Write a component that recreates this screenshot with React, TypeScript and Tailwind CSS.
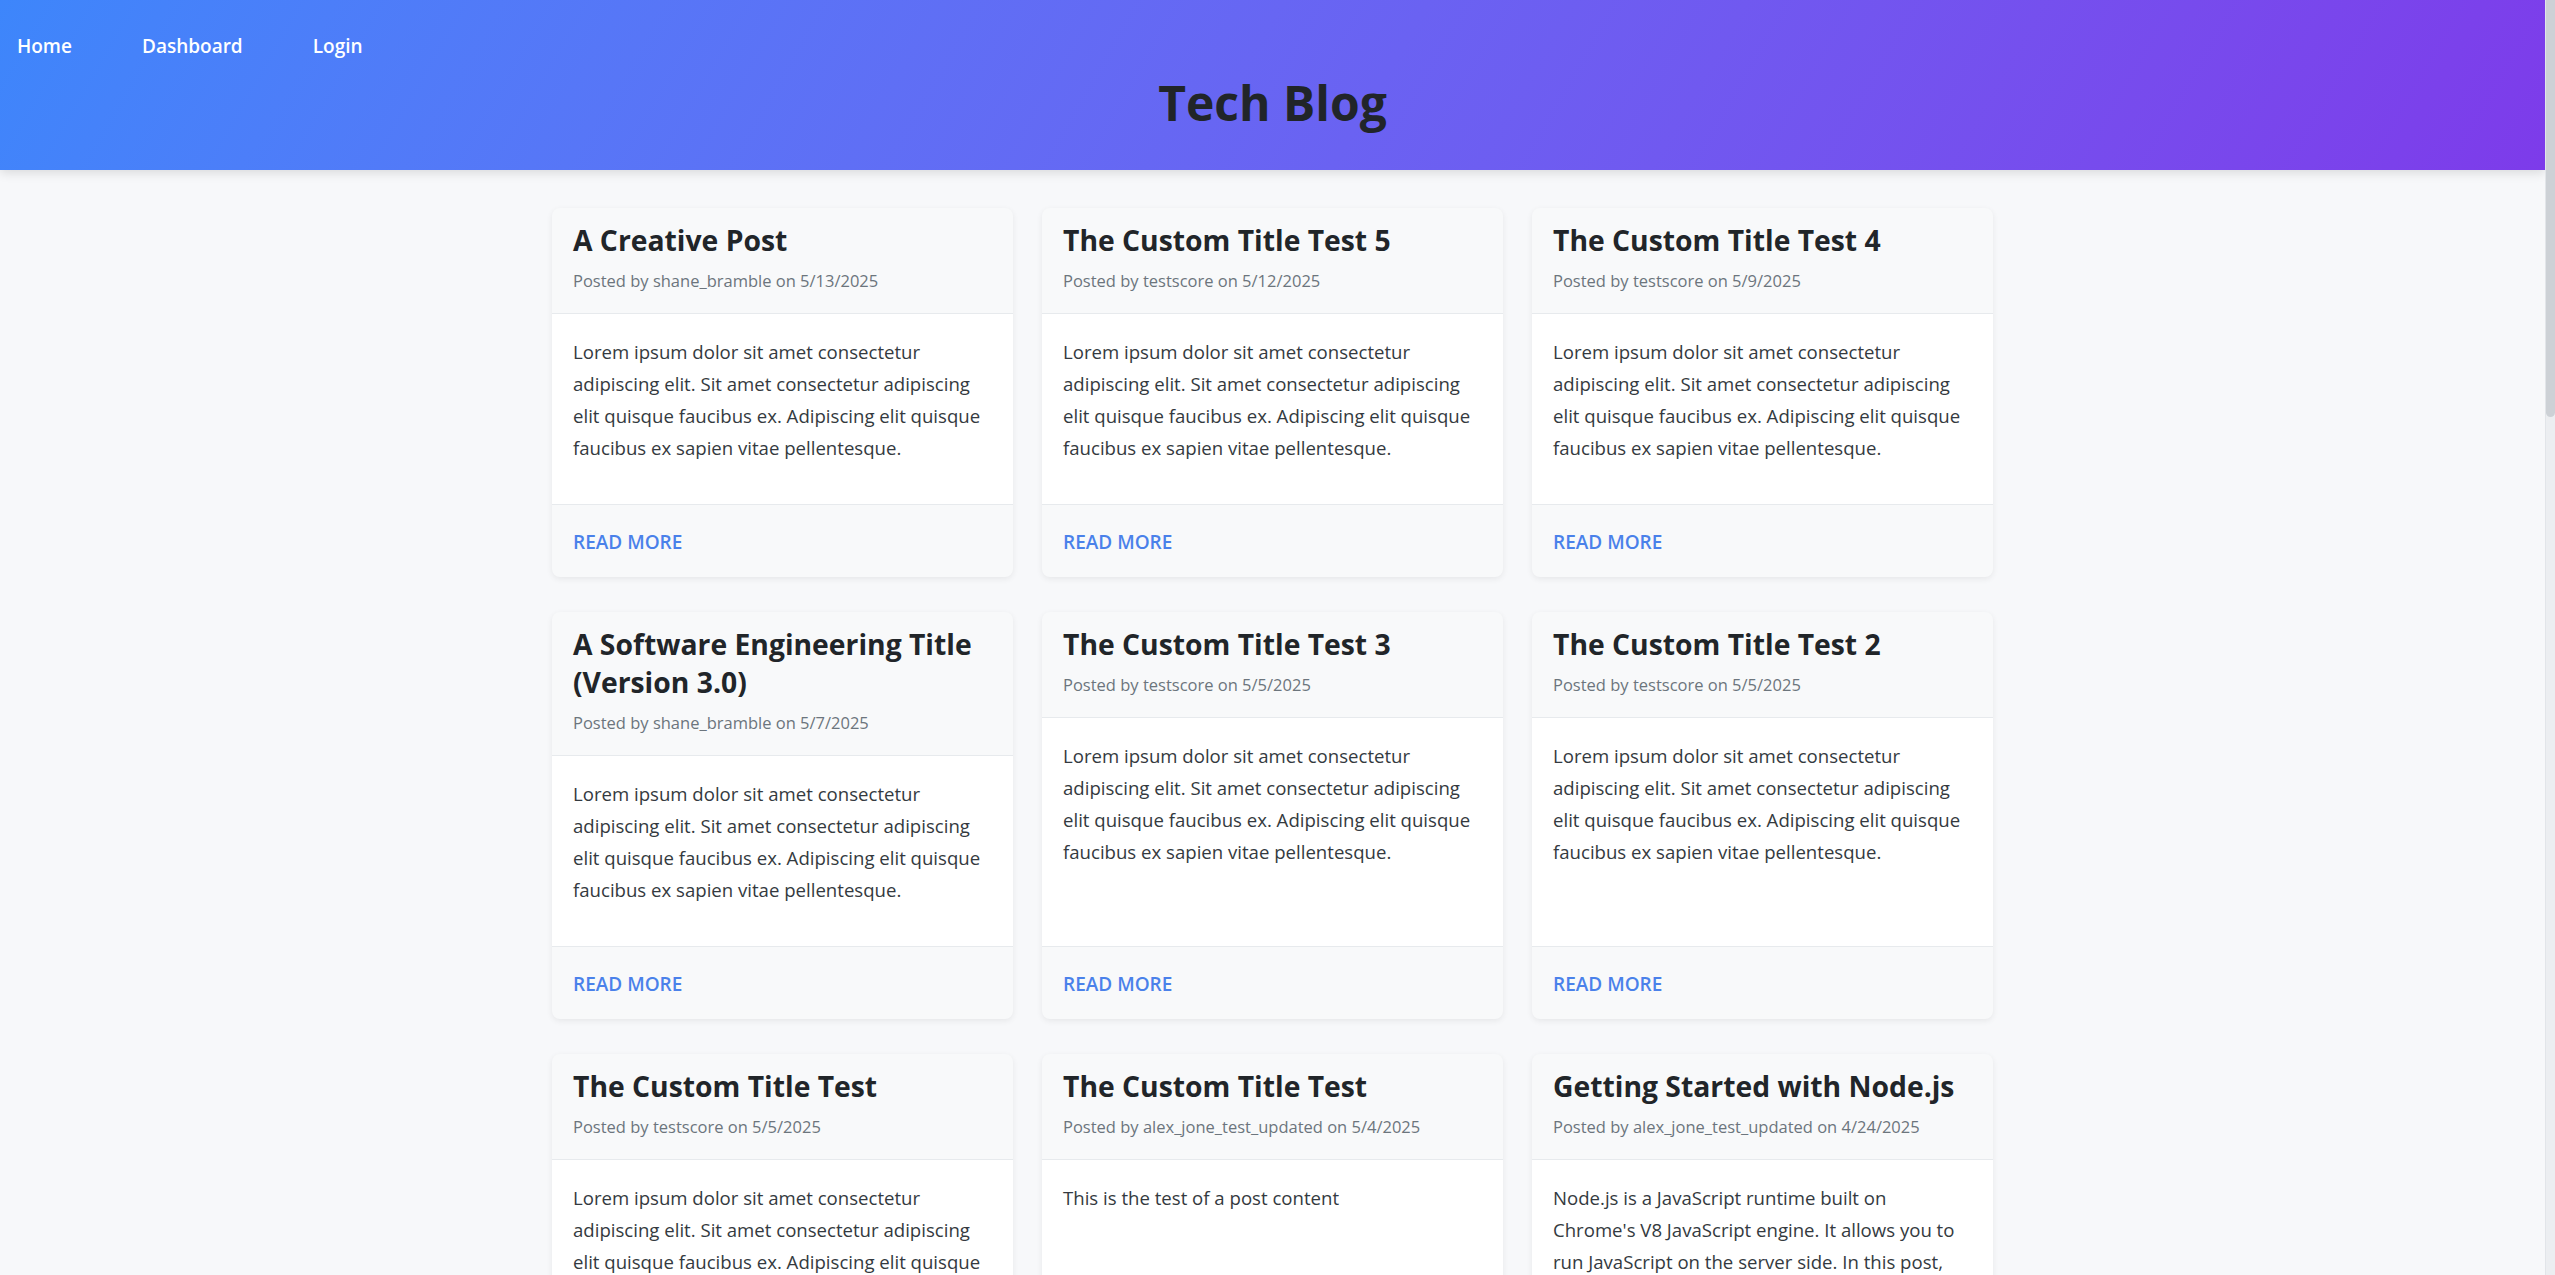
import React from "react";

interface Post {
  id: number;
  title: string;
  author: string;
  date: string;
  content: string;
}

const lorem =
  "Lorem ipsum dolor sit amet consectetur adipiscing elit. Sit amet consectetur adipiscing elit quisque faucibus ex. Adipiscing elit quisque faucibus ex sapien vitae pellentesque.";

const posts: Post[] = [
  { id: 1, title: "A Creative Post", author: "shane_bramble", date: "5/13/2025", content: lorem },
  { id: 2, title: "The Custom Title Test 5", author: "testscore", date: "5/12/2025", content: lorem },
  { id: 3, title: "The Custom Title Test 4", author: "testscore", date: "5/9/2025", content: lorem },
  { id: 4, title: "A Software Engineering Title (Version 3.0)", author: "shane_bramble", date: "5/7/2025", content: lorem },
  { id: 5, title: "The Custom Title Test 3", author: "testscore", date: "5/5/2025", content: lorem },
  { id: 6, title: "The Custom Title Test 2", author: "testscore", date: "5/5/2025", content: lorem },
  { id: 7, title: "The Custom Title Test", author: "testscore", date: "5/5/2025", content: lorem },
  { id: 8, title: "The Custom Title Test", author: "alex_jone_test_updated", date: "5/4/2025", content: "This is the test of a post content" },
  {
    id: 9,
    title: "Getting Started with Node.js",
    author: "alex_jone_test_updated",
    date: "4/24/2025",
    content:
      "Node.js is a JavaScript runtime built on Chrome's V8 JavaScript engine. It allows you to run JavaScript on the server side. In this post, we'll explore the basics of setting up a Node.js project.",
  },
  { id: 10, title: "Understanding Express Middleware", author: "alex_jone_test_updated", date: "4/22/2025", content: "Middleware functions have access to the request and response objects and the next function in the application's request-response cycle." },
  { id: 11, title: "Intro to Sequelize", author: "alex_jone_test_updated", date: "4/20/2025", content: "Sequelize is a promise-based ORM for Node.js that supports Postgres, MySQL, MariaDB, SQLite and Microsoft SQL Server." },
  { id: 12, title: "Handlebars Templates", author: "testscore", date: "4/18/2025", content: lorem },
];

function PostCard({ post }: { post: Post }) {
  return (
    <article className="flex flex-col rounded-lg overflow-hidden bg-[#f8f9fa] shadow-[0_2px_6px_rgba(0,0,0,0.07)]">
      <div className="px-[21px] pt-[13px] pb-[20px] border-b border-[#e7eaed]">
        <h2 className="text-[28.3px] leading-[38px] font-bold text-[#212529]">{post.title}</h2>
        <p className="mt-[10px] text-[16.5px] leading-[24px] text-[#6c757d]">
          Posted by {post.author} on {post.date}
        </p>
      </div>
      <div className="flex-1 bg-white px-[21px] pt-[22px] pb-[20px]">
        <p className="mb-[20px] text-[18.6px] leading-[32px] text-[#343a40]">{post.content}</p>
      </div>
      <div className="flex items-center h-[73px] pt-[2px] px-[21px] border-t border-[#e7eaed]">
        <a href="#" className="text-[19px] leading-[26px] font-semibold uppercase text-[#4a81ea]">
          Read More
        </a>
      </div>
    </article>
  );
}

export default function App() {
  return (
    <div className="flex h-screen bg-[#f7f8fa] [font-family:'Open_Sans',sans-serif]">
      <div className="flex-1 overflow-y-auto">
        {/* Header */}
        <header className="relative z-10 h-[170px] bg-linear-120 from-[#3d86fb] to-[#7d3bea] shadow-[0_3px_10px_rgba(0,0,0,0.12)]">
          <nav className="flex items-center gap-[70px] pl-[17px] pt-[34px]">
            <a href="#" className="text-[19px] leading-[24px] font-semibold text-white">Home</a>
            <a href="#" className="text-[19px] leading-[24px] font-semibold text-white">Dashboard</a>
            <a href="#" className="text-[19px] leading-[24px] font-semibold text-white">Login</a>
          </nav>
          <h1 className="mt-[13px] text-center text-[48px] leading-[64px] font-bold text-[#212529]">Tech Blog</h1>
        </header>

        {/* Posts */}
        <main className="pt-[38px] pb-[40px]">
          <div className="max-w-[1441px] mx-auto grid grid-cols-3 gap-x-[29px] gap-y-[35px]">
            {posts.map((post) => (
              <PostCard key={post.id} post={post} />
            ))}
          </div>
        </main>
      </div>

      {/* Scrollbar */}
      <div className="w-[10px] shrink-0 bg-[#eceef1] border-l border-[#e2e5e9]">
        <div className="h-[417px] bg-[#cdd1d6] rounded-b-[5px]" />
      </div>
    </div>
  );
}
